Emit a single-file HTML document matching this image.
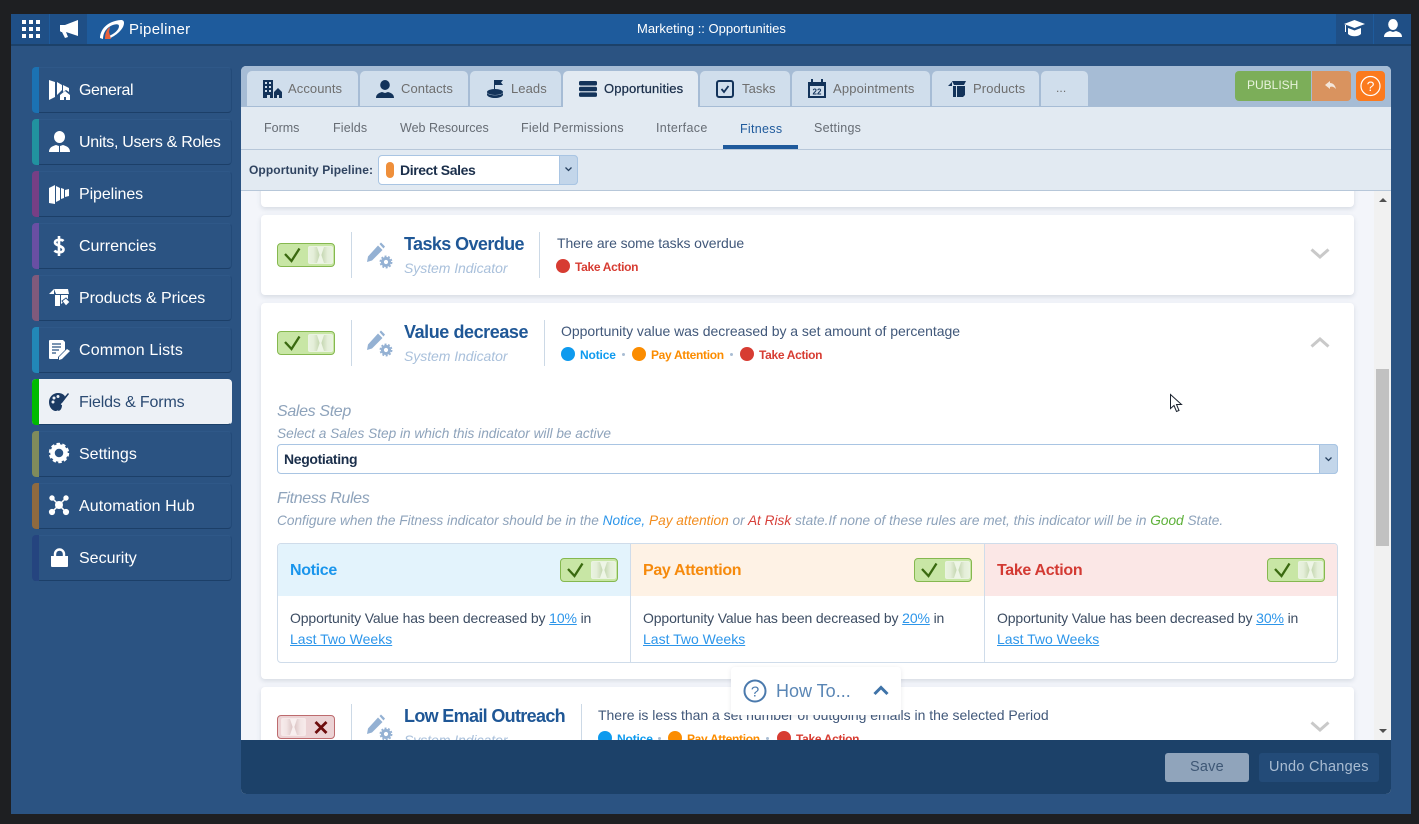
<!DOCTYPE html>
<html><head><meta charset="utf-8"><title>Pipeliner</title>
<style>
*{box-sizing:border-box;margin:0;padding:0}
html,body{width:1419px;height:824px;overflow:hidden;background:#1e1f22;font-family:"Liberation Sans",sans-serif}
.a{position:absolute}
.t{position:absolute;white-space:nowrap}
svg{position:absolute;overflow:visible}
.side{position:absolute;left:32px;width:200px;height:46px;background:#2b5382;border:1px solid #2f5888;border-bottom:1px solid #1c3f68;border-right-color:#234a78;border-radius:4px}
.side i{position:absolute;left:-1px;top:-1px;bottom:-1px;width:7px;border-radius:4px 0 0 4px}
.sl{position:absolute;left:79px;color:#fff;font-size:16px;line-height:20px;white-space:nowrap}
.tab{position:absolute;top:71px;height:35px;background:#d0deec;border-radius:5px 5px 0 0}
.tl{position:absolute;top:81px;font-size:13px;line-height:15px;color:#6e6e6e;white-space:nowrap;letter-spacing:.08px}
.sub{position:absolute;top:121px;font-size:12.5px;line-height:15px;color:#666c74;white-space:nowrap}
.card{position:absolute;left:261px;width:1093px;background:#fff;border-radius:4px;box-shadow:0 2px 5px rgba(70,85,110,.16)}
.tog{position:absolute;width:58px;height:24px;background:#c8e6a5;border:1px solid #85b84f;border-radius:4px}
.tog b{position:absolute;left:30px;top:2px;width:25px;height:18px;background:linear-gradient(90deg,#e9f2df 0,#e4eed8 20%,#c9dab6 42%,#c9dab6 58%,#e4eed8 80%,#e9f2df 100%);border:1px solid #eaf3e1;border-radius:2px}
.tog b::after{content:"";position:absolute;left:8px;top:0;width:7px;height:16px;background:#eef5e6;clip-path:polygon(0 0,100% 0,62% 50%,100% 100%,0 100%,38% 50%)}
.tog.off{background:#ecd3d5;border-color:#bd6b6e}
.tog.off b{left:3px;background:linear-gradient(90deg,#f6ebeb 0,#f2e4e4 20%,#dfcaca 42%,#dfcaca 58%,#f2e4e4 80%,#f6ebeb 100%);border-color:#f6e9e9}
.tog.off b::after{background:#f8efef}
.vl{position:absolute;width:1px;background:#ccd9e6}
.h{position:absolute;font-size:18px;font-weight:bold;color:#1f5796;line-height:22px;white-space:nowrap}
.si{position:absolute;font-size:14px;font-style:italic;color:#a9c0db;line-height:17px;white-space:nowrap;letter-spacing:-.05px}
.d{position:absolute;font-size:14px;color:#41587a;line-height:17px;white-space:nowrap}
.dot{position:absolute;width:14px;height:14px;border-radius:50%}
.st{position:absolute;font-size:12px;font-weight:bold;line-height:15px;white-space:nowrap;letter-spacing:-.32px}
.sep{position:absolute;width:3px;height:3px;border-radius:50%;background:#a9bdd3}
.it{position:absolute;font-size:13.67px;font-style:italic;color:#8ea3bb;line-height:16px;white-space:nowrap}
.it2{position:absolute;font-size:16px;font-style:italic;color:#8ea3bb;line-height:18px;white-space:nowrap;letter-spacing:-.35px}
.rt{position:absolute;font-size:14px;color:#3d4d63;line-height:21px;white-space:nowrap}
.rt u{color:#2d96ea}
.rt span{letter-spacing:-.13px}
.rh{position:absolute;font-size:16px;font-weight:bold;line-height:20px;white-space:nowrap;letter-spacing:-.33px}
</style></head>
<body>
<!-- window -->
<div class="a" style="left:11px;top:14px;width:1400px;height:800px;background:#2b5382"></div>
<div class="a" style="left:11px;top:14px;width:1400px;height:30px;background:#1e5b9c"></div>
<div class="a" style="left:11px;top:44px;width:1400px;height:2px;background:#1c4169"></div>
<div class="a" style="left:11px;top:14px;width:38px;height:30px;background:#1f4f86"></div>
<div class="a" style="left:50px;top:14px;width:37px;height:30px;background:#1f4f86"></div>
<div class="a" style="left:1336px;top:14px;width:37px;height:30px;background:#1f4f86"></div>
<div class="a" style="left:1374px;top:14px;width:37px;height:30px;background:#1f4f86"></div>
<svg style="left:22px;top:20px" width="18" height="18" fill="#fff"><path d="M0 0h4v4H0zM7 0h4v4H7zM14 0h4v4h-4zM0 7h4v4H0zM7 7h4v4H7zM14 7h4v4h-4zM0 14h4v4H0zM7 14h4v4h-4zM14 14h4v4h-4z"/></svg>
<svg style="left:60px;top:20px" width="19" height="18" fill="#fff"><path d="M0 5h5L18 0v16L6 12l2 5-3 1-3-6H1l-1-1z"/></svg>
<svg style="left:99px;top:18px" width="28" height="24"><path d="M1 20C1 12 8 3 22 2c2 0 3 1 3 3 0 6-8 13-16 16l1-3c5-2 10-6 10-10 0-3-6-2-10 1-4 3-6 7-6 12z" fill="#fff" fill-rule="evenodd"/><path d="M6 21c0-6 2-10 5-12l-1 5 2 7z" fill="#e8613c"/></svg>
<div class="t" style="left:129px;top:21px;color:#fff;font-size:15px;line-height:18px;letter-spacing:.35px">Pipeliner</div>
<div class="t" style="left:637px;top:21px;color:#fff;font-size:13px;line-height:15px">Marketing :: Opportunities</div>
<svg style="left:1344px;top:20px" width="21" height="18" fill="#fff"><path d="M10.500 0 21 4l-10.500 4L0 4zM4 8l6.500 2.500L17 8v6c-3 3-10 3-13 0zM1 5h1v7H1z"/></svg>
<svg style="left:1384px;top:19px" width="18" height="19" fill="#fff"><ellipse cx="9" cy="5.500" rx="4.800" ry="5.500"/><path d="M0 18c0-4 3-5 6-6l3 1 3-1c3 1 6 2 6 6z"/></svg>

<!-- sidebar -->
<div class="side" style="top:67px"><i style="background:#1b72b3"></i></div>
<div class="side" style="top:119px"><i style="background:#21929f"></i></div>
<div class="side" style="top:171px"><i style="background:#763f85"></i></div>
<div class="side" style="top:223px"><i style="background:#694fa3"></i></div>
<div class="side" style="top:275px"><i style="background:#7f5a7c"></i></div>
<div class="side" style="top:327px"><i style="background:#2287b7"></i></div>
<div class="side" style="top:379px;background:#edf1f6;border-color:#edf1f6;border-bottom-color:#1c4169"><i style="background:#00bb00"></i></div>
<div class="side" style="top:431px"><i style="background:#7f8b5c"></i></div>
<div class="side" style="top:483px"><i style="background:#8e6a40"></i></div>
<div class="side" style="top:535px"><i style="background:#25447f"></i></div>
<div class="sl" style="top:81px;letter-spacing:-.4px">General</div>
<div class="sl" style="top:133px;letter-spacing:-.3px">Units, Users &amp; Roles</div>
<div class="sl" style="top:185px;letter-spacing:-.1px">Pipelines</div>
<div class="sl" style="top:237px">Currencies</div>
<div class="sl" style="top:289px;letter-spacing:-.06px">Products &amp; Prices</div>
<div class="sl" style="top:341px;letter-spacing:.15px">Common Lists</div>
<div class="sl" style="top:393px;color:#2b4a72;letter-spacing:-.15px">Fields &amp; Forms</div>
<div class="sl" style="top:445px">Settings</div>
<div class="sl" style="top:497px;letter-spacing:.07px">Automation Hub</div>
<div class="sl" style="top:549px">Security</div>
<svg style="left:49px;top:80px" width="21" height="20" fill="#fff"><path d="M0 0l6 2v15l-6 3zM8 2l5 3v5l-5 5zM14 5l6 3v4l-3-2-3 2z"/><path d="M11 15l5-4 5 4v5h-4v-3h-2v3h-4z"/></svg>
<svg style="left:49px;top:131px" width="21" height="21" fill="#fff"><ellipse cx="10.500" cy="6" rx="5.500" ry="6"/><path d="M0 21c0-5 4-6 7-7l3 1v6h1v-6l3-1c3 1 7 2 7 7z"/></svg>
<svg style="left:49px;top:185px" width="20" height="19" fill="#fff"><path d="M0 3l6-3v19l-6-1zM7 1l4 2v12l-4 2zM12 3l3 1v9l-3 1zM16 5l4-1v7l-4 1z"/></svg>
<svg style="left:53px;top:236px" width="12" height="20" fill="none" stroke="#fff" stroke-width="2.600"><path d="M10.500 5C9 3.500 2 3 2 6.500s8.500 3 8.500 7-7.500 3-9 1M6 0v20"/></svg>
<svg style="left:49px;top:288px" width="21" height="19" fill="#fff"><path d="M0 6l5-5v5zM5 1h14l1 5H7zM6 7h5v11H6zM12 7h7v4l-7 5z"/><path d="M13 13l4-3 4 4-4 4z" stroke="#2b5382"/></svg>
<svg style="left:49px;top:340px" width="21" height="20" fill="#fff"><path d="M1 0h13l2 2v8l-7 7v2H1a1 1 0 0 1-1-1V1a1 1 0 0 1 1-1z"/><path d="M3 4h9M3 7h9M3 10h7M3 13h4" stroke="#2b5382" stroke-width="1.300"/><path d="M10 17l8-8 3 2-8 8-3 1z"/></svg>
<svg style="left:49px;top:392px" width="20" height="20" fill="#1b3a63"><path d="M9 1c5 0 8 3 7 6l-4 5-2 5c-1 2-3 2-4 2-4-1-6-5-6-9 0-5 4-9 9-9z"/><circle cx="5" cy="6" r="1.500" fill="#edf1f6"/><circle cx="9" cy="4.500" r="1.500" fill="#edf1f6"/><circle cx="4" cy="10" r="1.500" fill="#edf1f6"/><path d="M19 1l1 1-7 9-2-1zM10 12l3 1c0 4-2 6-4 6 1-2 0-4 1-7z"/></svg>
<svg style="left:49px;top:443px" width="20" height="20"><circle cx="10" cy="10" r="6.500" fill="none" stroke="#fff" stroke-width="4.500"/><circle cx="10" cy="10" r="9.200" fill="none" stroke="#fff" stroke-width="2" stroke-dasharray="3.500 2.300"/></svg>
<svg style="left:49px;top:495px" width="20" height="20" fill="#fff" stroke="#fff"><path d="M3 3l14 14M17 3L3 17" stroke-width="1.500"/><circle cx="10" cy="10" r="3.500"/><circle cx="3" cy="3" r="2.200"/><circle cx="17" cy="3" r="2.200"/><circle cx="3" cy="17" r="2.600"/><circle cx="17" cy="17" r="2.600"/></svg>
<svg style="left:51px;top:548px" width="17" height="19" fill="#fff"><path d="M0 8h17v10a1 1 0 0 1-1 1H1a1 1 0 0 1-1-1z"/><path d="M4 9V6a4.500 4.500 0 0 1 9 0v3" fill="none" stroke="#fff" stroke-width="2.400"/></svg>

<!-- main panel -->
<div class="a" style="left:241px;top:66px;width:1150px;height:728px;border-radius:5px 5px 5px 5px;background:#e2eaf2;overflow:hidden"></div>
<div class="a" style="left:241px;top:66px;width:1150px;height:41px;background:#a6bcd5;border-radius:5px 5px 0 0"></div>
<div class="tab" style="left:247px;width:111px"></div>
<div class="tab" style="left:360px;width:108px"></div>
<div class="tab" style="left:470px;width:91px"></div>
<div class="tab" style="left:563px;width:135px;height:36px;background:#e2eaf2"></div>
<div class="tab" style="left:700px;width:90px"></div>
<div class="tab" style="left:792px;width:138px"></div>
<div class="tab" style="left:932px;width:107px"></div>
<div class="tab" style="left:1041px;width:47px"></div>
<div class="tl" style="left:288px">Accounts</div>
<div class="tl" style="left:401px">Contacts</div>
<div class="tl" style="left:511px">Leads</div>
<div class="tl" style="left:604px;color:#1b2f4b;-webkit-text-stroke:.25px #1b2f4b;letter-spacing:.15px">Opportunities</div>
<div class="tl" style="left:742px">Tasks</div>
<div class="tl" style="left:833px;letter-spacing:.17px">Appointments</div>
<div class="tl" style="left:973px;letter-spacing:.12px">Products</div>
<div class="tl" style="left:1056px;font-size:12px">...</div>
<svg style="left:263px;top:80px" width="19" height="18" fill="#13335a"><path d="M0 0h10v18H7v-3H4v3H0zM2 2v2h2V2zM6 2v2h2V2zM2 6v2h2V6zM6 6v2h2V6zM2 10v2h2v-2zM6 10v2h2v-2z" fill-rule="evenodd"/><path d="M11 12l4-4 4 4v6h-3v-3h-2v3h-3z"/></svg>
<svg style="left:376px;top:80px" width="18" height="18" fill="#13335a"><ellipse cx="9" cy="5" rx="4.800" ry="5"/><path d="M0 18c0-4 3-5 6-6l3 1 3-1c3 1 6 2 6 6z"/></svg>
<svg style="left:487px;top:80px" width="16" height="18" fill="#13335a"><path d="M7 0h1v9H7zM8 0l8 0-2 2.500L16 5H8z"/><ellipse cx="8" cy="12" rx="8" ry="3"/><path d="M0 13c2 3 14 3 16 0v2c-2 4-14 4-16 0z"/></svg>
<svg style="left:579px;top:81px" width="18" height="16" fill="#13335a"><rect width="18" height="4.500" rx="1.500"/><rect y="5.700" width="18" height="4.500" rx="1.500"/><rect y="11.400" width="18" height="4.500" rx="1.500"/></svg>
<svg style="left:716px;top:80px" width="18" height="18"><rect x="1" y="1" width="16" height="16" rx="2" fill="none" stroke="#13335a" stroke-width="2"/><path d="M5.500 9l2.500 3 4.500-6" fill="none" stroke="#13335a" stroke-width="1.800"/></svg>
<svg style="left:808px;top:79px" width="18" height="19" fill="#13335a"><path d="M0 3h3V0h2v3h8V0h2v3h3v16H0zM2 7v10h14V7z" fill-rule="evenodd"/><text x="9" y="15.500" font-size="8" font-weight="bold" text-anchor="middle" font-family="Liberation Sans">22</text></svg>
<svg style="left:948px;top:81px" width="18" height="16" fill="#13335a"><path d="M0 5l4-4v4zM4 0h14l-2 4H6zM5 5h3v11H5zM9 5h8v9l-2 2H9z"/></svg>
<!-- publish -->
<div class="a" style="left:1235px;top:71px;width:76px;height:30px;background:#7cae59;border-radius:4px 0 0 4px"></div>
<div class="t" style="left:1247px;top:78px;color:#e8f3dc;font-size:12px;line-height:15px">PUBLISH</div>
<div class="a" style="left:1312px;top:71px;width:39px;height:30px;background:#d9935f;border-radius:0 4px 4px 0"></div>
<svg style="left:1325px;top:81px" width="11" height="9" fill="#f4e6da"><path d="M0 4l5-4v2c3 0 5 2 6 6-2-2-4-3-6-2v2z"/></svg>
<div class="a" style="left:1356px;top:71px;width:29px;height:30px;background:#fb7a1e;border-radius:4px"></div>
<svg style="left:1360px;top:75px" width="21" height="22"><circle cx="10.500" cy="11" r="9.500" fill="none" stroke="#fff" stroke-width="1.200"/><text x="10.500" y="16" font-size="14" fill="#fff" text-anchor="middle" font-family="Liberation Sans">?</text></svg>
<!-- subnav -->
<div class="sub" style="left:264px">Forms</div>
<div class="sub" style="left:333px;letter-spacing:.15px">Fields</div>
<div class="sub" style="left:400px">Web Resources</div>
<div class="sub" style="left:521px;letter-spacing:.25px">Field Permissions</div>
<div class="sub" style="left:656px;letter-spacing:.33px">Interface</div>
<div class="sub" style="left:740px;top:122px;color:#1f5a9c;letter-spacing:.3px">Fitness</div>
<div class="sub" style="left:814px;letter-spacing:.25px">Settings</div>
<div class="a" style="left:723px;top:145px;width:75px;height:4px;background:#1f5a9c"></div>
<div class="a" style="left:241px;top:149px;width:1150px;height:1px;background:#b7c7d9"></div>
<!-- pipeline row -->
<div class="t" style="left:249px;top:163px;font-size:12px;font-weight:bold;line-height:15px;color:#2f4360;letter-spacing:.1px">Opportunity Pipeline:</div>
<div class="a" style="left:378px;top:155px;width:200px;height:30px;background:#fff;border:1px solid #a9c5e3;border-radius:4px"></div>
<div class="a" style="left:559px;top:155px;width:19px;height:30px;background:#c3d6ea;border:1px solid #a9c5e3;border-radius:0 4px 4px 0"></div>
<svg style="left:565px;top:167px" width="7" height="5"><path d="M.5.500L3.500 3.500 6.500.500" fill="none" stroke="#26405f" stroke-width="1.300"/></svg>
<div class="a" style="left:386px;top:162px;width:8px;height:16px;border-radius:4px;background:#ef8f3a"></div>
<div class="t" style="left:400px;top:162px;font-size:14px;font-weight:bold;line-height:16px;color:#1b2f4b;letter-spacing:-.4px">Direct Sales</div>
<div class="a" style="left:241px;top:190px;width:1150px;height:1px;background:#b7c7d9"></div>

<!-- content -->
<div class="a" style="left:241px;top:191px;width:1133px;height:549px;background:#f3f5fa;overflow:hidden">
  <div class="a" style="left:20px;top:-10px;width:1093px;height:26px;background:#fff;border-radius:4px;box-shadow:0 2px 5px rgba(70,85,110,.16)"></div>
</div>
<div class="a" style="left:1374px;top:191px;width:17px;height:549px;background:#f1f1f1"></div>
<div class="a" style="left:1376px;top:369px;width:13px;height:177px;background:#c1c1c1"></div>
<svg style="left:1379px;top:198px" width="8" height="4"><path d="M4 0l4 4H0z" fill="#505050"/></svg>
<svg style="left:1379px;top:729px" width="8" height="4"><path d="M0 0h8L4 4z" fill="#505050"/></svg>

<!-- Card: tasks overdue -->
<div class="card" style="top:215px;height:80px"></div>
<div class="tog" style="left:277px;top:243px"><b></b></div>
<svg style="left:284px;top:248px" width="16" height="14"><path d="M1 6l6.500 7L15.500.500" fill="none" stroke="#3a6a10" stroke-width="2.300"/></svg>
<div class="vl" style="left:351px;top:232px;height:46px"></div>
<svg style="left:367px;top:242px" width="26" height="27"><path d="M1 14.500L11 3.500l4.500 4.500L5 18.500l-5 1.500zM12.500 2L14 .500l4 4L16.500 6.500z" fill="#94b1d3"/><g fill="none" stroke="#94b1d3"><circle cx="19" cy="20" r="3.600" stroke-width="3"/><circle cx="19" cy="20" r="5.700" stroke-width="1.500" stroke-dasharray="2 1.600"/></g></svg>
<div class="h" style="left:404px;top:233px;letter-spacing:-.6px">Tasks Overdue</div>
<div class="si" style="left:404px;top:260px">System Indicator</div>
<div class="vl" style="left:539px;top:232px;height:46px"></div>
<div class="d" style="left:557px;top:235px;letter-spacing:-.1px">There are some tasks overdue</div>
<div class="dot" style="left:556px;top:259px;background:#d73c32"></div>
<div class="st" style="left:575px;top:260px;color:#d73c32">Take Action</div>
<svg style="left:1310px;top:248px" width="20" height="12"><path d="M1.500 1.500L10 9l8.500-7.500" fill="none" stroke="#c9c9c9" stroke-width="3"/></svg>

<!-- Card: value decrease -->
<div class="card" style="top:303px;height:376px"></div>
<div class="tog" style="left:277px;top:331px"><b></b></div>
<svg style="left:284px;top:336px" width="16" height="14"><path d="M1 6l6.500 7L15.500.500" fill="none" stroke="#3a6a10" stroke-width="2.300"/></svg>
<div class="vl" style="left:351px;top:320px;height:46px"></div>
<svg style="left:367px;top:330px" width="26" height="27"><path d="M1 14.500L11 3.500l4.500 4.500L5 18.500l-5 1.500zM12.500 2L14 .500l4 4L16.500 6.500z" fill="#94b1d3"/><g fill="none" stroke="#94b1d3"><circle cx="19" cy="20" r="3.600" stroke-width="3"/><circle cx="19" cy="20" r="5.700" stroke-width="1.500" stroke-dasharray="2 1.600"/></g></svg>
<div class="h" style="left:404px;top:321px;letter-spacing:-.43px">Value decrease</div>
<div class="si" style="left:404px;top:348px">System Indicator</div>
<div class="vl" style="left:544px;top:320px;height:46px"></div>
<div class="d" style="left:561px;top:323px;letter-spacing:-.03px">Opportunity value was decreased by a set amount of percentage</div>
<div class="dot" style="left:561px;top:347px;background:#0e9aee"></div>
<div class="st" style="left:580px;top:348px;color:#0e9aee;letter-spacing:-.15px">Notice</div>
<div class="sep" style="left:622px;top:353px"></div>
<div class="dot" style="left:632px;top:347px;background:#fb8c00"></div>
<div class="st" style="left:651px;top:348px;color:#fb8c00">Pay Attention</div>
<div class="sep" style="left:730px;top:353px"></div>
<div class="dot" style="left:740px;top:347px;background:#d73c32"></div>
<div class="st" style="left:759px;top:348px;color:#d73c32">Take Action</div>
<svg style="left:1310px;top:336px" width="20" height="12"><path d="M1.500 10.500L10 3l8.500 7.500" fill="none" stroke="#c9c9c9" stroke-width="3"/></svg>

<div class="it2" style="left:277px;top:403px">Sales Step</div>
<div class="it" style="left:277px;top:426px">Select a Sales Step in which this indicator will be active</div>
<div class="a" style="left:277px;top:444px;width:1061px;height:30px;background:#fff;border:1px solid #a9c5e3;border-radius:4px"></div>
<div class="a" style="left:1319px;top:444px;width:19px;height:30px;background:#c3d6ea;border:1px solid #a9c5e3;border-radius:0 4px 4px 0"></div>
<svg style="left:1325px;top:457px" width="7" height="5"><path d="M.5.500L3.500 3.500 6.500.500" fill="none" stroke="#26405f" stroke-width="1.300"/></svg>
<div class="t" style="left:284px;top:451px;font-size:14px;font-weight:bold;line-height:16px;color:#1b2f4b;letter-spacing:-.35px">Negotiating</div>
<div class="it2" style="left:277px;top:490px">Fitness Rules</div>
<div class="it" style="left:277px;top:513px">Configure when the Fitness indicator should be in the <span style="color:#2d96ea">Notice,</span> <span style="color:#f28c1d">Pay attention</span> or <span style="color:#d7403a">At Risk</span> state.If none of these rules are met, this indicator will be in <span style="color:#5cb038">Good</span> State.</div>

<div class="a" style="left:277px;top:543px;width:1061px;height:120px;border:1px solid #cfdcea;border-radius:4px;background:#fff;overflow:hidden">
  <div class="a" style="left:0;top:0;width:353px;height:52px;background:#e3f3fc"></div>
  <div class="a" style="left:353px;top:0;width:353px;height:52px;background:#fef2e5"></div>
  <div class="a" style="left:707px;top:0;width:353px;height:52px;background:#fbe7e6"></div>
  <div class="a" style="left:352px;top:0;width:1px;height:118px;background:#cfdcea"></div>
  <div class="a" style="left:706px;top:0;width:1px;height:118px;background:#cfdcea"></div>
</div>
<div class="rh" style="left:290px;top:561px;color:#1a95ec">Notice</div>
<div class="rh" style="left:643px;top:561px;color:#f68a0c">Pay Attention</div>
<div class="rh" style="left:997px;top:561px;color:#d33a33">Take Action</div>
<div class="tog" style="left:560px;top:558px"><b></b></div>
<svg style="left:567px;top:563px" width="16" height="14"><path d="M1 6l6.500 7L15.500.500" fill="none" stroke="#3a6a10" stroke-width="2.300"/></svg>
<div class="tog" style="left:914px;top:558px"><b></b></div>
<svg style="left:921px;top:563px" width="16" height="14"><path d="M1 6l6.500 7L15.500.500" fill="none" stroke="#3a6a10" stroke-width="2.300"/></svg>
<div class="tog" style="left:1267px;top:558px"><b></b></div>
<svg style="left:1274px;top:563px" width="16" height="14"><path d="M1 6l6.500 7L15.500.500" fill="none" stroke="#3a6a10" stroke-width="2.300"/></svg>
<div class="rt" style="left:290px;top:608px"><span>Opportunity Value has been decreased by <u>10%</u> in</span><br><u>Last Two Weeks</u></div>
<div class="rt" style="left:643px;top:608px"><span>Opportunity Value has been decreased by <u>20%</u> in</span><br><u>Last Two Weeks</u></div>
<div class="rt" style="left:997px;top:608px"><span>Opportunity Value has been decreased by <u>30%</u> in</span><br><u>Last Two Weeks</u></div>

<!-- Card: low email -->
<div class="card" style="top:687px;height:70px"></div>
<div class="tog off" style="left:277px;top:715px"><b></b></div>
<svg style="left:314px;top:721px" width="14" height="13"><path d="M1.500 1l11 11M12.500 1l-11 11" stroke="#6d0d0d" stroke-width="2.800"/></svg>
<div class="vl" style="left:351px;top:704px;height:46px"></div>
<svg style="left:367px;top:714px" width="26" height="27"><path d="M1 14.500L11 3.500l4.500 4.500L5 18.500l-5 1.500zM12.500 2L14 .500l4 4L16.500 6.500z" fill="#94b1d3"/><g fill="none" stroke="#94b1d3"><circle cx="19" cy="20" r="3.600" stroke-width="3"/><circle cx="19" cy="20" r="5.700" stroke-width="1.500" stroke-dasharray="2 1.600"/></g></svg>
<div class="h" style="left:404px;top:705px;letter-spacing:-.67px">Low Email Outreach</div>
<div class="si" style="left:404px;top:732px">System Indicator</div>
<div class="vl" style="left:581px;top:704px;height:46px"></div>
<div class="d" style="left:598px;top:707px;letter-spacing:-.02px">There is less than a set number of outgoing emails in the selected Period</div>
<div class="dot" style="left:598px;top:731px;background:#0e9aee"></div>
<div class="st" style="left:617px;top:732px;color:#0e9aee;letter-spacing:-.15px">Notice</div>
<div class="sep" style="left:658px;top:737px"></div>
<div class="dot" style="left:668px;top:731px;background:#fb8c00"></div>
<div class="st" style="left:687px;top:732px;color:#fb8c00">Pay Attention</div>
<div class="sep" style="left:766px;top:737px"></div>
<div class="dot" style="left:777px;top:731px;background:#d73c32"></div>
<div class="st" style="left:796px;top:732px;color:#d73c32">Take Action</div>
<svg style="left:1310px;top:721px" width="20" height="12"><path d="M1.500 1.500L10 9l8.500-7.500" fill="none" stroke="#c9c9c9" stroke-width="3"/></svg>

<!-- how to -->
<div class="a" style="left:731px;top:667px;width:170px;height:48px;background:#fff;border-radius:4px;box-shadow:0 1px 5px rgba(70,85,110,.12)"></div>
<svg style="left:743px;top:679px" width="24" height="24"><circle cx="12" cy="12" r="10.500" fill="none" stroke="#4b7aad" stroke-width="2"/><text x="12" y="17.500" font-size="15" fill="#4b7aad" text-anchor="middle" font-family="Liberation Sans">?</text></svg>
<div class="t" style="left:776px;top:680px;font-size:18px;line-height:22px;color:#5a86b5">How To...</div>
<svg style="left:873px;top:685px" width="16" height="11"><path d="M1.500 9L8 2.500 14.500 9" fill="none" stroke="#3f73a8" stroke-width="3"/></svg>

<!-- footer -->
<div class="a" style="left:241px;top:740px;width:1150px;height:54px;background:#1c4169;border-radius:0 0 5px 5px"></div>
<div class="a" style="left:1165px;top:753px;width:84px;height:29px;background:#90a4bb;border-radius:3px"></div>
<div class="t" style="left:1190px;top:758px;font-size:14.500px;line-height:18px;color:#3e5775;letter-spacing:.2px">Save</div>
<div class="a" style="left:1259px;top:753px;width:120px;height:29px;background:#234b78;border-radius:3px"></div>
<div class="t" style="left:1269px;top:758px;font-size:14.500px;line-height:18px;color:#a9bcd2;letter-spacing:.25px">Undo Changes</div>

<!-- cursor -->
<svg style="left:1170px;top:394px" width="13" height="20"><path d="M.5.500v14l3.500-3 2.500 6 2.500-1-2.500-6h5z" fill="#fff" stroke="#1c2430" stroke-width="1"/></svg>
</body></html>
